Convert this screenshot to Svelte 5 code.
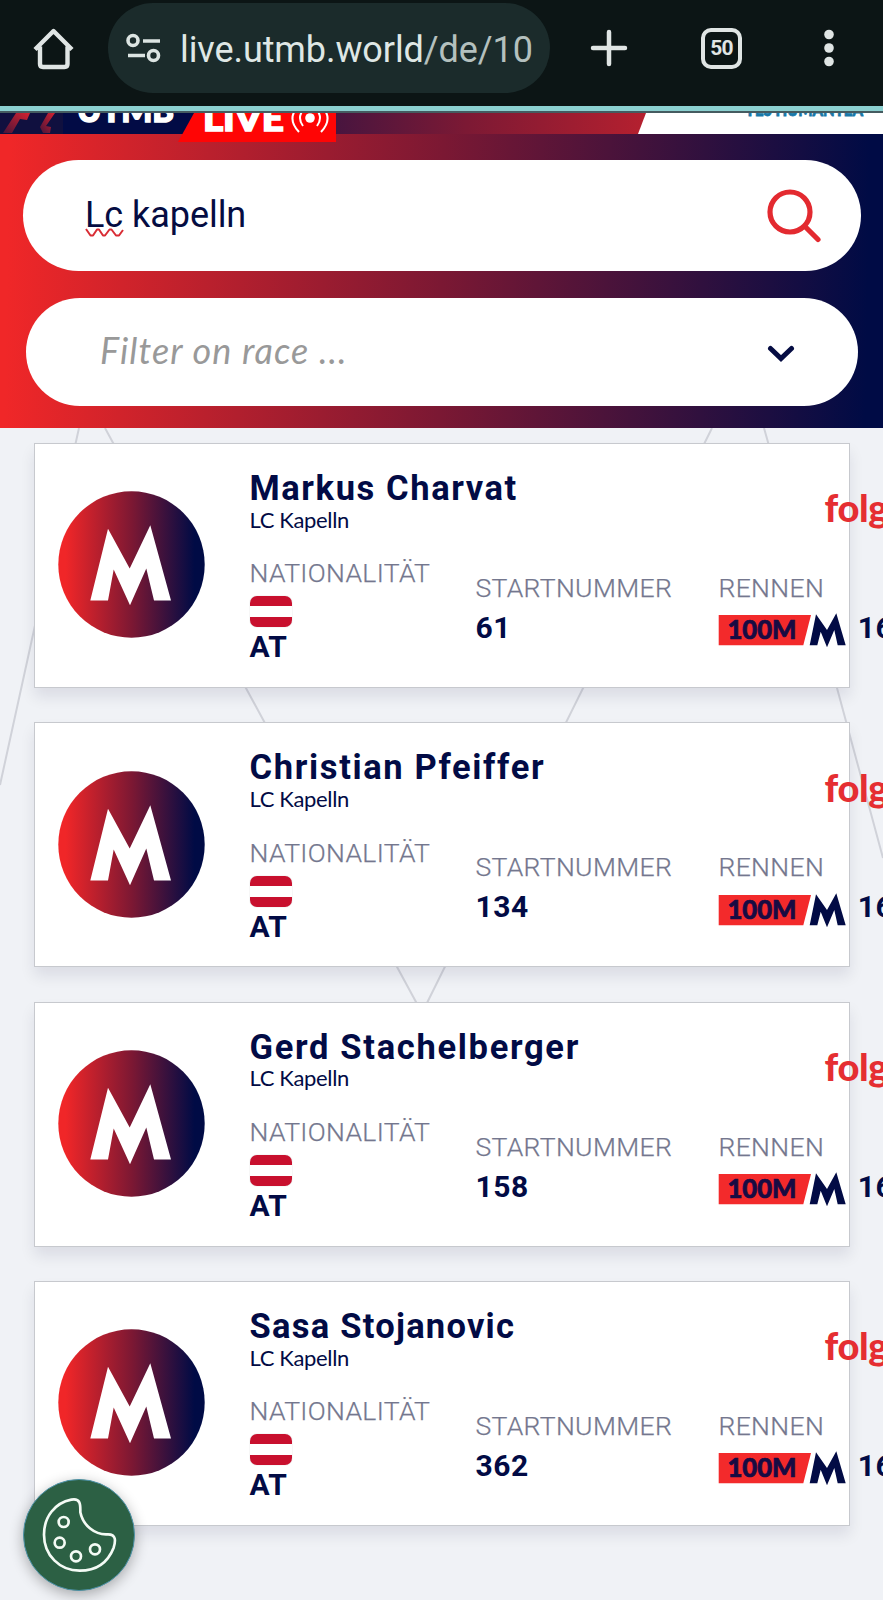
<script>
  const runners = [
    { name: 'Markus Charvat', club: 'LC Kapelln', country: 'AT', bib: '61', spacing: 1.6 },
    { name: 'Christian Pfeiffer', club: 'LC Kapelln', country: 'AT', bib: '134', spacing: 1.65 },
    { name: 'Gerd Stachelberger', club: 'LC Kapelln', country: 'AT', bib: '158', spacing: 1.68 },
    { name: 'Sasa Stojanovic', club: 'LC Kapelln', country: 'AT', bib: '362', spacing: 1.25 }
  ];
</script>

<div class="page">
  <div class="browser">
    <svg class="home" width="42" height="42" viewBox="0 0 42 42" fill="none" stroke="#e0e5e4" stroke-width="4.4" stroke-linejoin="round">
      <path d="M2 21.5 20.500 3 39 21.500M7 18.500V36Q7 39 10 39H31.500Q34.500 39 34.500 36V18.500" />
    </svg>
    <div class="address">
      <svg width="36" height="30" viewBox="0 0 36 30" fill="none" stroke="#dce4e2" stroke-width="3.600">
        <circle cx="7" cy="7.500" r="5" /><path d="M17 8H34M2 22.500H19" /><circle cx="27.500" cy="22.500" r="5" />
      </svg>
      <span class="url">live.utmb.world<em>/de/10</em></span>
    </div>
    <svg class="plus" width="38" height="38" viewBox="0 0 38 38" stroke="#e0e5e4" stroke-width="4.500" stroke-linecap="round">
      <path d="M19 3V35M3 19H35" />
    </svg>
    <div class="tabs">50</div>
    <svg class="dots" width="12" height="40" viewBox="0 0 12 40" fill="#e0e5e4">
      <circle cx="6" cy="6.500" r="4.800" /><circle cx="6" cy="20" r="4.800" /><circle cx="6" cy="33.500" r="4.800" />
    </svg>
  </div>

  <svg class="strip" width="883" height="29" viewBox="0 0 883 29">
    <defs>
      <linearGradient id="banner" x1="0" x2="1"><stop offset="0" stop-color="#48153f" /><stop offset=".42" stop-color="#7c1934" /><stop offset="1" stop-color="#b5202f" /></linearGradient>
      <linearGradient id="shard" x1="0" x2="1" y1="1" y2="0"><stop offset="0" stop-color="#4a1439" /><stop offset="1" stop-color="#d42230" /></linearGradient>
    </defs>
    <rect width="200" height="21" fill="#020b45" />
    <rect x="0" width="63" height="21" fill="#10103f" />
    <path d="M3 20 16 0H30L27 7 20 6 12 20Z" fill="url(#shard)" />
    <path d="M40 14 48 0H55L46 13 51 14 50 20H43Z" fill="url(#shard)" />
    <rect x="336" width="310" height="21" fill="url(#banner)" />
    <path d="M646 0H883V21H638Z" fill="#fff" />
    <path d="M194 0H336V29H178Z" fill="#ff0505" />
    <text x="77" y="8.500" class="logo" font-size="33" textLength="97" lengthAdjust="spacingAndGlyphs" fill="#fff" stroke="#fff" stroke-width="1.500">UTMB</text>
    <text x="203" y="17.500" class="logo" font-size="34" textLength="81" lengthAdjust="spacingAndGlyphs" fill="#fff" stroke="#fff" stroke-width="1.500">LIVE</text>
    <g fill="none" stroke="#fff" stroke-width="2">
      <circle cx="310" cy="5" r="4.800" fill="#fff" stroke="none" />
      <path d="M303 13Q297 5 303 -3M317 13Q323 5 317 -3M299 19Q287 6 297 -5M321 19Q333 6 323 -5" />
    </g>
    <text x="745" y="3" class="logo" font-size="19" textLength="118" lengthAdjust="spacingAndGlyphs" fill="#1878a8" stroke="#1878a8" stroke-width=".8">YES HUMANTEA</text>
  </svg>

  <header class="filters">
    <div class="search">
      <span class="query"><span class="typo">Lc<svg width="40" height="10" viewBox="0 0 40 10" fill="none" stroke="#d92d35" stroke-width="2"><path d="M1 1 5.500 7.500H8L12 1.500H14L18 7.500H20L24.500 1.500H26.500L31 7.500H34L38 2" stroke-linejoin="round" /></svg></span> kapelln</span>
      <svg width="56" height="56" viewBox="0 0 56 56" fill="none" stroke="#e32a30" stroke-width="5.200" stroke-linecap="round">
        <circle cx="25" cy="25" r="20" /><path d="M40 39.500 53 52.500" />
      </svg>
    </div>
    <div class="select">
      <span>Filter on race ...</span>
      <svg width="28" height="18" viewBox="0 0 28 18" fill="none" stroke="#050c42" stroke-width="5" stroke-linecap="round" stroke-linejoin="miter">
        <path d="M3.500 3.500 14 13.500 24.500 3.500" />
      </svg>
    </div>
  </header>

  <main>
    <svg class="peaks" width="883" height="1172" viewBox="0 428 883 1172" fill="none" stroke="#d0d2d9" stroke-width="2">
      <path d="M79 428 34 630 0 785M105 428 422 1013 712 428M764 428 837 688 883 858" />
    </svg>
    {#each runners as runner}
      <article>
        <svg class="avatar" width="147" height="147" viewBox="0 0 147 147">
          <defs><linearGradient id="disc" x1="0" x2="1"><stop offset=".05" stop-color="#f02628" /><stop offset=".5" stop-color="#7d1833" /><stop offset=".93" stop-color="#000b45" /></linearGradient></defs>
          <circle cx="73.500" cy="73.500" r="73.200" fill="url(#disc)" />
          <path d="M32.300 109.500 50 37.800 71.700 77.500 92.300 34.200 113 109.500H96L88.300 77.500 72 114.200 55.700 78.500 50 109.500Z" fill="#fff" />
        </svg>
        <div class="details">
          <div class="top">
            <div>
              <h2 style="letter-spacing: {runner.spacing}px">{runner.name}</h2>
              <p>{runner.club}</p>
            </div>
            <a class="follow" href="#follow">folgen</a>
          </div>
          <div class="fields">
            <div class="field nation">
              <span class="label">NATIONALITÄT</span>
              <span class="flag"></span>
              <strong>{runner.country}</strong>
            </div>
            <div class="field bib">
              <span class="label">STARTNUMMER</span>
              <strong>{runner.bib}</strong>
            </div>
            <div class="field race">
              <span class="label">RENNEN</span>
              <div class="distance">
                <svg width="130" height="36" viewBox="0 0 130 36">
                  <path d="M.7 2H93L85.300 32.300H.7Z" fill="#f32a2b" />
                  <text x="9.500" y="26.300" class="logo" font-size="26" textLength="69" lengthAdjust="spacingAndGlyphs" fill="#170b43" stroke="#170b43" stroke-width=".7">100M</text>
                  <path d="M91.700 32.300 98 1.300 109 17 118.300 .3 127.700 32.300H119.700L116.300 17 109 34.300 102.700 18.700 99.300 32.300Z" fill="#020b45" />
                </svg>
                <strong>16</strong>
              </div>
            </div>
          </div>
        </div>
      </article>
    {/each}
  </main>

  <button class="cookie" aria-label="Cookies">
    <svg width="112" height="112" viewBox="70 56 336 336" fill="none" stroke="#f4fbf5" stroke-width="8">
      <path d="M215 118C245 112 242 138 242 156C250 195 285 225 325 222C350 222 348 242 342 262C325 305 290 331 240 331C180 331 133 285 133 223C133 170 165 128 215 118Z" />
      <circle cx="192" cy="185" r="15" /><circle cx="180" cy="247" r="15" /><circle cx="229" cy="288" r="15" /><circle cx="286" cy="267" r="15" />
    </svg>
  </button>
</div>

<style>
  :global(body) { margin: 0; }
  .page { position: relative; width: 883px; height: 1600px; overflow: hidden; background: #f0f2f6; font-family: Roboto, sans-serif; color: #020b45; }
  .browser { box-sizing: border-box; height: 113px; padding: 3px 0 0 33px; display: flex; align-items: flex-start; background: #0c1515; border-bottom: 2px solid #455b60; box-shadow: inset 0 -5px #8bd0d0; }
  .home { margin-top: 25px; }
  .address { box-sizing: border-box; width: 442px; height: 90px; margin-left: 33px; padding-left: 18px; display: flex; align-items: center; border-radius: 45px; background: #1b2b2b; }
  .url { width: 353px; margin: 4px 0 0 18px; overflow: hidden; white-space: nowrap; font-size: 36px; line-height: 48px; color: #dfe7e5; letter-spacing: -.08px; }
  .url em { font-style: normal; color: #b4c0be; }
  .plus { margin: 26px 0 0 40px; }
  .tabs { box-sizing: border-box; width: 41px; height: 41px; margin: 25px 0 0 73px; border: 4px solid #e0e5e4; border-radius: 10px; color: #e0e5e4; font-size: 21px; font-weight: 700; line-height: 33px; text-align: center; letter-spacing: -.8px; }
  .dots { margin: 25px 0 0 81px; }
  .strip { display: block; position: relative; z-index: 1; margin-bottom: -8px; }
  .logo { font-family: Lato, sans-serif; font-weight: 900; }
  .filters { box-sizing: border-box; height: 294px; padding: 26px 22px 0 23px; background: linear-gradient(91deg, #f02728 1%, #7b1833 50%, #000b45 98%); }
  .search, .select { box-sizing: border-box; display: flex; align-items: center; justify-content: space-between; background: #fff; border-radius: 56px; }
  .search { height: 111px; padding: 0 40px 2px 62px; }
  .query { padding-top: 1px; font-size: 36px; color: #050c42; letter-spacing: -.05px; }
  .typo { position: relative; }
  .typo svg { position: absolute; left: 0; top: 34px; }
  .select { height: 108px; margin: 27px 3px 0; padding: 0 63px 0 74px; }
  .select span { padding-bottom: 5px; font: italic 36px Lato, sans-serif; color: #999; letter-spacing: 1.1px; }
  .select svg { margin-top: 3px; }
  main { position: relative; padding: 15px 0 0 33.500px; display: flex; flex-direction: column; gap: 34.400px; }
  .peaks { position: absolute; left: 0; top: 0; }
  article { position: relative; box-sizing: border-box; width: 816px; height: 245px; padding: 24.300px 0 0 23px; display: flex; background: #fff; border: 1px solid #c7c9ce; box-shadow: 0 9px 14px rgba(10, 15, 50, .09); }
  .avatar { flex: none; margin-top: 23px; }
  .details { margin-left: 45px; flex: none; }
  .top { display: flex; align-items: flex-start; height: 89px; }
  .top > div { width: 575px; }
  h2 { margin: -.5px 0 0; font-size: 34.500px; line-height: 40px; font-weight: 700; white-space: nowrap; }
  p { margin: -.3px 0 0; font: 22px/24px Lato, sans-serif; letter-spacing: -.35px; }
  .follow { margin-top: 16px; color: #e52e32; font: 900 38px/46px Lato, sans-serif; text-decoration: none; letter-spacing: -.4px; }
  .fields { display: flex; align-items: center; height: 106px; }
  .field { display: flex; flex-direction: column; align-items: flex-start; flex: none; }
  .nation { width: 226px; }
  .bib { width: 243px; }
  .bib, .race { margin-top: -5px; }
  .label { font-size: 26.500px; line-height: 30px; font-weight: 300; letter-spacing: .35px; color: #74778e; white-space: nowrap; -webkit-text-stroke: .25px #74778e; }
  strong { font-size: 30px; line-height: 30px; font-weight: 700; letter-spacing: .5px; }
  .flag { width: 42px; height: 31px; margin: 8px 0 5px; border-radius: 7px; background: linear-gradient(#c8102e 33.300%, #fff 33.300% 66.600%, #c8102e 66.600%); box-shadow: 0 0 1px #aaa; }
  .bib .label, .race .label { margin-bottom: 10px; }
  .distance { display: flex; align-items: center; gap: 10px; height: 30px; }
  .distance svg { margin: 7px 0 0 -.7px; }
  .cookie { position: absolute; left: 23px; top: 1479px; width: 112px; height: 112px; padding: 0; border: 1px solid #4d92a8; border-radius: 50%; background: #2c6044; box-shadow: 0 4px 14px rgba(0, 0, 0, .3); }
  .cookie svg { display: block; margin: -1px; }
</style>
